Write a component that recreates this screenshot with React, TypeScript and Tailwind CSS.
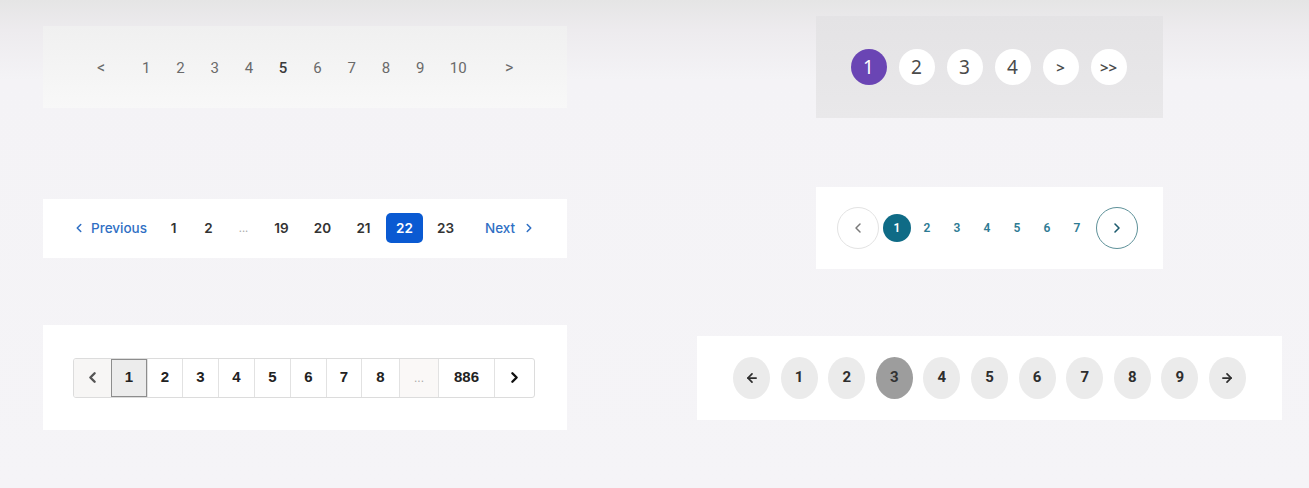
import { ArrowLeft, ArrowRight, ChevronLeft, ChevronRight } from 'lucide-react'

const simplePages = ['1', '2', '3', '4', '5', '6', '7', '8', '9', '10']

function SimplePager() {
  return (
    <div className="flex h-[82px] w-[524px] items-center bg-[linear-gradient(to_bottom,#f0f0f0,#f8f8f8)] pl-[41px] pt-[2px] text-[15px] text-[#6a6a6a]" style={{ fontFamily: 'Roboto, sans-serif' }}>
      <span className="mr-[11px] w-[34px] text-center text-[16px]">&lt;</span>
      {simplePages.map(p => (
        <span
          key={p}
          className={`text-center ${p === '10' ? 'w-[42px]' : 'w-[34.25px]'} ${p === '5' ? 'font-medium text-[#3a3a3a]' : ''}`}
        >
          {p}
        </span>
      ))}
      <span className="ml-[13px] w-[34px] text-center text-[16px]">&gt;</span>
    </div>
  )
}

function BubblePager() {
  const items = ['1', '2', '3', '4', '>', '>>']
  return (
    <div className="flex h-[102px] w-[347px] items-center justify-center gap-3 bg-[linear-gradient(to_bottom,#e4e3e5,#e9e8ea)] pr-[2px]" style={{ fontFamily: '"Noto Sans", sans-serif' }}>
      {items.map((it, i) => (
        <span
          key={it}
          className={`flex h-9 w-9 items-center justify-center rounded-full ${i === 0 ? 'bg-[#6a45b4] text-white' : 'bg-white text-[#4a4a4a]'} ${i > 3 ? 'text-[15px] font-semibold' : 'text-[19px]'}`}
        >
          {it}
        </span>
      ))}
    </div>
  )
}

function TextPager() {
  const cells = ['1', '2', '...', '19', '20', '21', '22', '23']
  return (
    <div className="flex h-[59px] w-[524px] items-center bg-white pl-[29px] text-[13.5px] font-semibold text-[#333]" style={{ fontFamily: 'Inter, sans-serif' }}>
      <span className="flex w-[84px] items-center gap-[5px] text-[#2f6fc4]">
        <ChevronLeft size={14} strokeWidth={2.6} />
        <span className="font-medium">Previous</span>
      </span>
      {cells.map(c => (
        <span key={c} className={`flex items-center justify-center ${c.length === 2 ? 'w-[41px]' : 'w-[35px]'}`}>
          {c === '22' ? (
            <span className="flex h-[30px] w-[37px] items-center justify-center rounded-[5px] bg-[#0a5ad2] text-white">22</span>
          ) : c === '...' ? (
            <span className="text-[11px] font-normal text-[#aaa]">...</span>
          ) : (
            c
          )}
        </span>
      ))}
      <span className="ml-[19px] flex items-center gap-[7px] text-[#2f6fc4]">
        <span className="font-medium">Next</span>
        <ChevronRight size={14} strokeWidth={2.6} />
      </span>
    </div>
  )
}

function RoundPager() {
  const nums = ['1', '2', '3', '4', '5', '6', '7']
  return (
    <div className="flex h-[82px] w-[347px] items-center justify-center bg-white pr-[4px] text-[12px] font-semibold text-[#2e7b93]" style={{ fontFamily: 'Roboto, sans-serif' }}>
      <span className="mr-[3px] flex h-[42px] w-[42px] items-center justify-center rounded-full border border-[#e3e3e3] text-[#7a7a7a]">
        <ChevronLeft size={16} strokeWidth={2.2} />
      </span>
      {nums.map((n, i) => (
        <span key={n} className="flex w-[30px] items-center justify-center">
          {i === 0 ? (
            <span className="flex h-7 w-7 items-center justify-center rounded-full bg-[#0f6b86] text-white">1</span>
          ) : (
            n
          )}
        </span>
      ))}
      <span className="ml-[4px] flex h-[42px] w-[42px] items-center justify-center rounded-full border-[1.5px] border-[#5e9199] text-[#1d5b6e]">
        <ChevronRight size={16} strokeWidth={2.4} />
      </span>
    </div>
  )
}

function BoxPager() {
  const cells = [
    { t: '1', w: 'w-[36px]' },
    { t: '2', w: 'w-[35px]' },
    { t: '3', w: 'w-[36px]' },
    { t: '4', w: 'w-[36px]' },
    { t: '5', w: 'w-[36px]' },
    { t: '6', w: 'w-[36px]' },
    { t: '7', w: 'w-[35px]' },
    { t: '8', w: 'w-[38px]' },
    { t: '...', w: 'w-[39px]' },
    { t: '886', w: 'w-[56px]' },
  ]
  return (
    <div className="flex h-[105px] w-[524px] items-center bg-white pl-[30px]" style={{ fontFamily: '"Liberation Sans", Arial, sans-serif' }}>
      <div className="flex h-10 overflow-hidden rounded-[3px] border border-[#dcdcdc] text-[15px] font-bold text-[#222]">
        <span className="flex w-[37px] items-center justify-center bg-[#f7f6f5] text-[#555]">
          <ChevronLeft size={17} strokeWidth={3.4} />
        </span>
        {cells.map((c, i) => (
          <span
            key={c.t}
            className={`flex items-center justify-center border-l ${c.w} ${i === 0 ? 'border border-[#8d8d8d] bg-[#ececec]' : 'border-[#e2e2e2]'} ${c.t === '...' ? 'bg-[#faf8f7] text-[12px] font-normal text-[#aaa]' : ''}`}
          >
            {c.t}
          </span>
        ))}
        <span className="flex w-[40px] items-center justify-center border-l border-[#e2e2e2] text-[#111]">
          <ChevronRight size={17} strokeWidth={3.4} />
        </span>
      </div>
    </div>
  )
}

function PillPager() {
  const nums = ['1', '2', '3', '4', '5', '6', '7', '8', '9']
  const pill = 'flex h-[42px] w-[37px] items-center justify-center rounded-[50%]'
  return (
    <div className="flex h-[84px] w-[585px] items-center justify-center gap-[10.6px] bg-white text-[15px] font-bold text-[#2e2e2e]" style={{ fontFamily: 'Roboto, sans-serif' }}>
      <span className={`${pill} bg-[#ebebeb]`}>
        <ArrowLeft size={14} strokeWidth={3} />
      </span>
      {nums.map(n => (
        <span key={n} className={`${pill} ${n === '3' ? 'bg-[#9d9d9d] text-[#333]' : 'bg-[#ebebeb]'}`}>
          {n}
        </span>
      ))}
      <span className={`${pill} bg-[#ebebeb]`}>
        <ArrowRight size={14} strokeWidth={3} />
      </span>
    </div>
  )
}

export default function App() {
  return (
    <main className="h-[488px] w-[1309px] overflow-hidden bg-[linear-gradient(to_bottom,#e5e5e5_0px,#edebee_30px,#f4f3f6_80px,#f5f4f7_100%)] pt-4">
      <div className="flex h-[102px] items-center">
        <div className="w-[697px] pl-[43px]"><SimplePager /></div>
        <div className="flex w-[585px] justify-center"><BubblePager /></div>
      </div>
      <div className="mt-[69px] flex h-[82px] items-center">
        <div className="w-[697px] pl-[43px]"><TextPager /></div>
        <div className="flex w-[585px] justify-center"><RoundPager /></div>
      </div>
      <div className="mt-[56px] flex h-[105px] items-center">
        <div className="w-[697px] pl-[43px]"><BoxPager /></div>
        <div className="flex w-[585px] justify-center"><PillPager /></div>
      </div>
    </main>
  )
}
